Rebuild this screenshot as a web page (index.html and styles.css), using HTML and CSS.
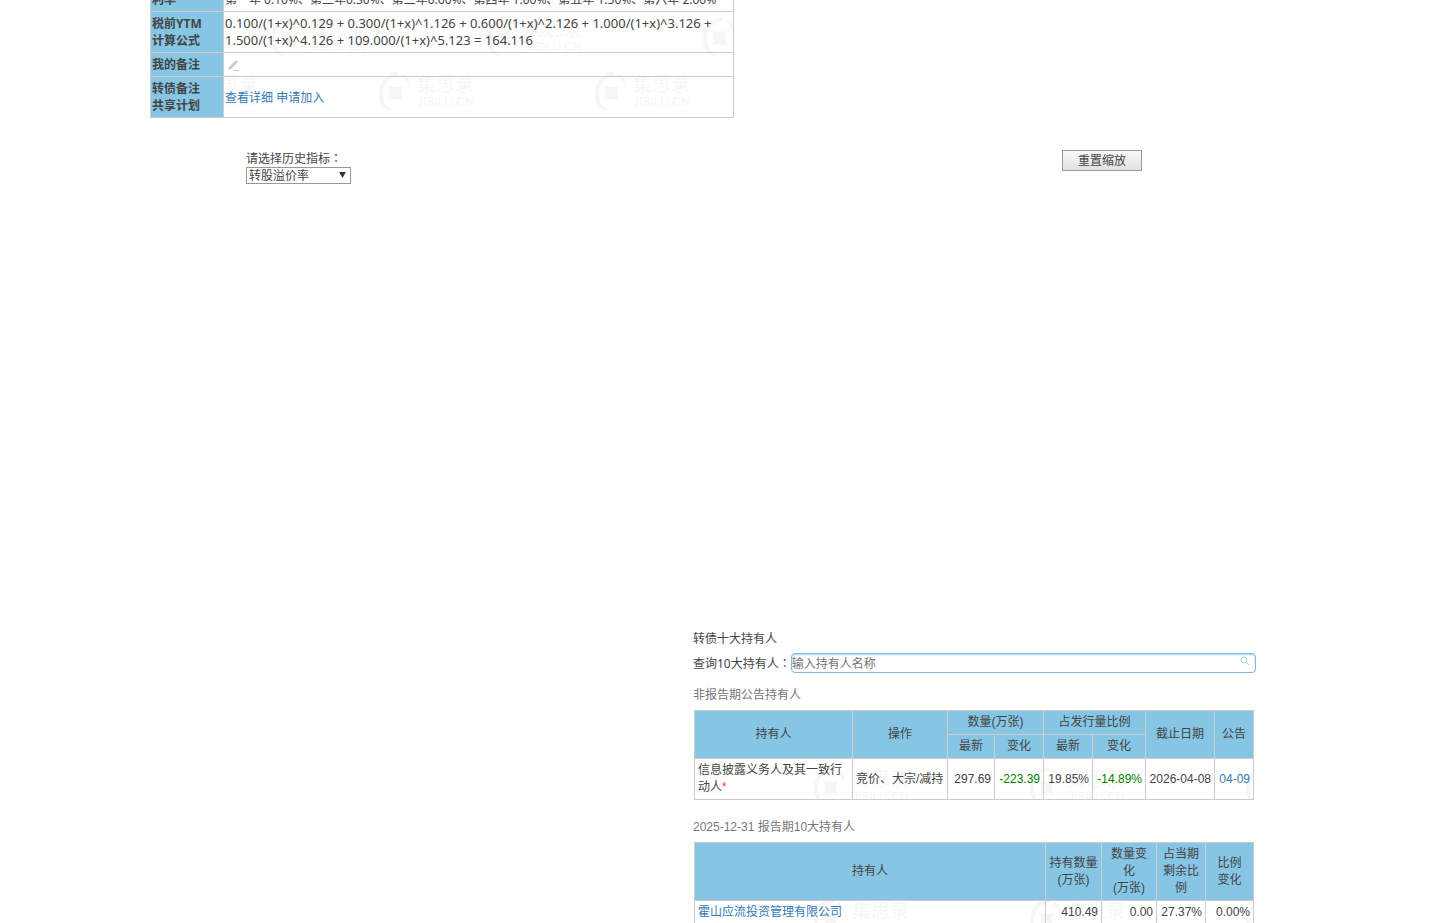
FILE: index.html
```html
<!DOCTYPE html>
<html lang="zh-CN">
<head>
    <meta charset="UTF-8">
    <meta name="viewport" content="width=device-width, initial-scale=1.0">
    <title>转债详情</title>
    <link rel="stylesheet" href="styles.css">
</head>
<body>
    <svg class="defs" aria-hidden="true">
        <symbol id="mark" viewBox="-20 -24 104 48" overflow="visible">
            <path d="M 4 -20 C -7 -23 -16 -12 -16 1 C -16 12 -9 19 -1 18 C -8 14 -12 9 -12 0 C -12 -9 -6 -17 4 -17 Z"/>
            <path d="M 7 -19 Q 14 -16 15 -8 L 12 -9 Q 11 -14 7 -16 Z"/>
            <path d="M -7 -8 Q 0 -4 8 -8 Q 4 0 8 8 Q 0 4 -7 8 Q -3 0 -7 -8 Z"/>
            <text class="mark-cn" x="22" y="-2">集思录</text>
            <text class="mark-en" x="22" y="13">JISILU.CN</text>
        </symbol>
    </svg>

    <div class="container">
        <div class="sheet info">
            <svg class="watermark" aria-hidden="true">
                <use href="#mark" x="117" y="27" width="104" height="48"/>
                <use href="#mark" x="333" y="27" width="104" height="48"/>
                <use href="#mark" x="549" y="27" width="104" height="48"/>
                <use href="#mark" x="9" y="82" width="104" height="48"/>
                <use href="#mark" x="225" y="82" width="104" height="48"/>
                <use href="#mark" x="441" y="82" width="104" height="48"/>
            </svg>
            <table>
                <colgroup><col class="w-label"><col></colgroup>
                <tr>
                    <th scope="row">利率</th>
                    <td>第一年 0.10%、第二年0.30%、第三年0.60%、第四年 1.00%、第五年 1.50%、第六年 2.00%</td>
                </tr>
                <tr>
                    <th scope="row">税前YTM<br>计算公式</th>
                    <td class="formula">0.100/(1+x)^0.129 + 0.300/(1+x)^1.126 + 0.600/(1+x)^2.126 + 1.000/(1+x)^3.126 + 1.500/(1+x)^4.126 + 109.000/(1+x)^5.123 = 164.116</td>
                </tr>
                <tr>
                    <th scope="row">我的备注</th>
                    <td>
                        <button class="edit" type="button" aria-label="编辑备注">
                            <svg viewBox="0 0 16 14"><path d="M3 12 L4 9 L11 2 L13 4 L6 11 Z M9 12 H14 V13 H8 Z"/></svg>
                        </button>
                    </td>
                </tr>
                <tr>
                    <th scope="row">转债备注<br>共享计划</th>
                    <td><a href="#">查看详细</a> <a href="#">申请加入</a></td>
                </tr>
            </table>
        </div>

        <div class="history">
            <div class="history-bar">
                <div class="indicator">
                    <label for="indicator">请选择历史指标<span class="colon" lang="zh-TW">：</span></label>
                    <div class="select">
                        <select id="indicator">
                            <option>转股溢价率</option>
                        </select>
                        <svg viewBox="0 0 8 7"><path d="M0 0 H8 L4 7 Z"/></svg>
                    </div>
                </div>
                <button class="reset" type="button">重置缩放</button>
            </div>
        </div>

        <div class="holders">
            <h2>转债十大持有人</h2>
            <div class="search">
                <label for="holder">查询10大持有人<span class="colon" lang="zh-TW">：</span></label>
                <div class="search-box">
                    <input type="text" id="holder" placeholder="输入持有人名称">
                    <svg viewBox="0 0 10 10"><circle cx="4" cy="4" r="3"/><path d="M6 6 L9 9"/></svg>
                </div>
            </div>

            <h3>非报告期公告持有人</h3>
            <div class="sheet">
                <svg class="watermark" aria-hidden="true">
                    <use href="#mark" x="116" y="54" width="104" height="48"/>
                    <use href="#mark" x="332" y="54" width="104" height="48"/>
                    <use href="#mark" x="548" y="54" width="104" height="48"/>
                </svg>
                <table>
                    <colgroup>
                        <col><col class="w-action"><col class="w-latest"><col class="w-change"><col class="w-change">
                        <col class="w-percent"><col class="w-date"><col class="w-notice">
                    </colgroup>
                    <thead>
                        <tr>
                            <th rowspan="2">持有人</th>
                            <th rowspan="2">操作</th>
                            <th colspan="2">数量(万张)</th>
                            <th colspan="2">占发行量比例</th>
                            <th rowspan="2">截止日期</th>
                            <th rowspan="2">公告</th>
                        </tr>
                        <tr>
                            <th>最新</th>
                            <th>变化</th>
                            <th>最新</th>
                            <th>变化</th>
                        </tr>
                    </thead>
                    <tbody>
                        <tr>
                            <td>信息披露义务人及其一致行动人<span class="star">*</span></td>
                            <td>竞价、大宗/减持</td>
                            <td class="num">297.69</td>
                            <td class="num down">-223.39</td>
                            <td class="num">19.85%</td>
                            <td class="num down">-14.89%</td>
                            <td class="num">2026-04-08</td>
                            <td class="num"><a href="#">04-09</a></td>
                        </tr>
                    </tbody>
                </table>
            </div>

            <h3>2025-12-31 报告期10大持有人</h3>
            <div class="sheet">
                <svg class="watermark" aria-hidden="true">
                    <use href="#mark" x="116" y="54" width="104" height="48"/>
                    <use href="#mark" x="332" y="54" width="104" height="48"/>
                    <use href="#mark" x="548" y="54" width="104" height="48"/>
                </svg>
                <table>
                    <colgroup>
                        <col><col class="w-amount"><col class="w-delta"><col class="w-ratio"><col class="w-diff">
                    </colgroup>
                    <thead>
                        <tr>
                            <th>持有人</th>
                            <th>持有数量<br>(万张)</th>
                            <th>数量变<br>化<br>(万张)</th>
                            <th>占当期剩余比例</th>
                            <th>比例<br>变化</th>
                        </tr>
                    </thead>
                    <tbody>
                        <tr>
                            <td><a href="#">霍山应流投资管理有限公司</a></td>
                            <td class="num">410.49</td>
                            <td class="num">0.00</td>
                            <td class="num">27.37%</td>
                            <td class="num">0.00%</td>
                        </tr>
                    </tbody>
                </table>
            </div>
        </div>
    </div>
</body>
</html>
```
FILE: styles.css
```css
* {
    box-sizing: border-box;
}

body {
    margin: 0;
    height: 100vh;
    overflow: hidden;
    background-color: #fff;
    color: #444;
    font-family: "Noto Sans", "Noto Sans CJK SC", sans-serif;
    font-size: 12px;
    line-height: 17px;
}

a {
    color: #337ab7;
    text-decoration: none;
}

button,
input,
select {
    font: inherit;
    color: inherit;
}

.defs {
    position: absolute;
    width: 0;
    height: 0;
}

.container {
    max-width: 1146px;
    margin: 0 auto;
}

.colon {
    font-family: "Noto Sans CJK TC", sans-serif;
}

/* tables */
.sheet {
    position: relative;
    isolation: isolate;
}

.watermark {
    position: absolute;
    inset: 0;
    z-index: -1;
    width: 100%;
    height: 100%;
    fill: #f6f6f6;
}

.mark-cn {
    font-size: 19px;
}

.mark-en {
    font-family: "Liberation Sans", sans-serif;
    font-size: 12px;
}

table {
    width: 100%;
    table-layout: fixed;
    border-collapse: collapse;
}

th,
td {
    border: 1px solid #ccc;
    padding: 3px;
}

th {
    background-color: #86c5e3;
    font-weight: normal;
    text-align: center;
}

/* bond details */
.info {
    width: 51%;
    margin-top: -13px;
}

.info th,
.info td {
    padding: 3px 1px;
    text-align: left;
}

.info th {
    font-weight: bold;
}

.info .formula {
    font-size: 13px;
}

.w-label {
    width: 73px;
}

.edit {
    display: block;
    width: 16px;
    height: 17px;
    padding: 0;
    border: 0;
    background: none;
    cursor: pointer;
}

.edit svg {
    display: block;
    width: 16px;
    height: 14px;
    fill: #ccc;
}

/* history chart */
.history {
    min-height: 513px;
    padding: 32px 154px 0 96px;
}

.history-bar {
    display: flex;
    justify-content: space-between;
    align-items: flex-start;
}

.indicator label {
    display: block;
    line-height: 16px;
}

.select {
    position: relative;
    width: 105px;
}

.select select {
    display: block;
    width: 100%;
    height: 17px;
    padding: 0 2px;
    border: 1px solid #999;
    border-radius: 0;
    background-color: #fff;
    line-height: 15px;
    appearance: none;
}

.select svg {
    position: absolute;
    top: 5px;
    right: 5px;
    width: 7px;
    height: 6px;
    fill: #333;
    pointer-events: none;
}

.reset {
    width: 80px;
    height: 21px;
    padding: 0;
    border: 1px solid #999;
    background: linear-gradient(#fafafa, #e0e0e0);
    cursor: pointer;
}

/* holders */
.holders {
    width: 563px;
    margin: 0 40px 0 auto;
    font-family: "Liberation Sans", "Noto Sans CJK SC", sans-serif;
}

.holders h2,
.holders h3 {
    margin: 0;
    font-size: 12px;
    font-weight: normal;
}

.holders h3 {
    margin: 14px 0 6px;
    color: #777;
}

.holders .sheet {
    width: 560px;
    margin-left: 1px;
}

.holders .sheet + h3 {
    margin-top: 19px;
}

.search {
    display: flex;
    align-items: center;
    margin-top: 5px;
    font-family: "Noto Sans", "Noto Sans CJK SC", sans-serif;
}

.search-box {
    position: relative;
    flex: 1;
}

.search-box input {
    display: block;
    width: 100%;
    height: 20px;
    padding: 0;
    border: 1px solid #7fb9dc;
    border-radius: 4px;
    background-color: #fff;
    box-shadow: inset 0 1px 2px #a8d3ee;
}

.search-box input::placeholder {
    color: #757575;
}

.search-box svg {
    position: absolute;
    top: 3px;
    right: 6px;
    width: 10px;
    height: 10px;
    fill: none;
    stroke: #a9d0ea;
    stroke-width: 1;
}

.num {
    text-align: right;
}

.down {
    color: #008000;
}

.star {
    color: #f44;
}

.w-action {
    width: 95px;
}

.w-latest {
    width: 47px;
}

.w-change,
.w-ratio {
    width: 49px;
}

.w-percent {
    width: 53px;
}

.w-date {
    width: 69px;
}

.w-notice {
    width: 39px;
}

.w-amount {
    width: 56px;
}

.w-delta {
    width: 55px;
}

.w-diff {
    width: 48px;
}
```
